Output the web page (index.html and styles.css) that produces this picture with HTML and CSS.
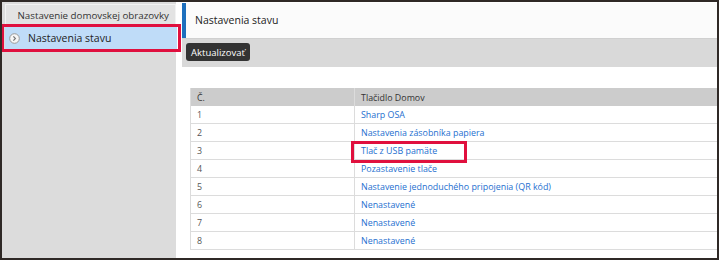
FILE: index.html
```html
<!DOCTYPE html>
<html lang="sk">
<head>
    <meta charset="UTF-8">
    <meta name="viewport" content="width=device-width, initial-scale=1.0">
    <title>Nastavenia stavu</title>
    <link rel="stylesheet" href="styles.css">
</head>
<body>
    <div class="frame">
        <aside class="sidebar">
            <div class="tab">Nastavenie domovskej obrazovky</div>
            <div class="menu-item active">
                <svg class="arrow" width="11" height="11" viewBox="0 0 11 11">
                    <circle cx="5.5" cy="5.5" r="4.8" fill="#f6f6f6" stroke="#9a9a9a" stroke-width="1"/>
                    <path d="M4.4 3.4 L6.4 5.5 L4.4 7.6" fill="none" stroke="#777" stroke-width="1.2"/>
                </svg>
                Nastavenia stavu
                <span class="mark mark-menu"></span>
            </div>
        </aside>
        <main class="content">
            <div class="page-title">Nastavenia stavu</div>
            <div class="toolbar">
                <button class="btn-update">Aktualizovať</button>
            </div>
            <table class="list">
                <thead>
                    <tr>
                        <th class="col-no">Č.</th>
                        <th>Tlačidlo Domov</th>
                    </tr>
                </thead>
                <tbody>
                    <tr><td>1</td><td><a href="#">Sharp OSA</a></td></tr>
                    <tr><td>2</td><td><a href="#">Nastavenia zásobníka papiera</a></td></tr>
                    <tr><td>3</td><td class="marked"><a href="#">Tlač z USB pamäte</a><span class="mark mark-row"></span></td></tr>
                    <tr><td>4</td><td><a href="#">Pozastavenie tlače</a></td></tr>
                    <tr><td>5</td><td><a href="#">Nastavenie jednoduchého pripojenia (QR kód)</a></td></tr>
                    <tr><td>6</td><td><a href="#">Nenastavené</a></td></tr>
                    <tr><td>7</td><td><a href="#">Nenastavené</a></td></tr>
                    <tr><td>8</td><td><a href="#">Nenastavené</a></td></tr>
                </tbody>
            </table>
        </main>
    </div>
</body>
</html>
```

FILE: styles.css
```css
body {
  margin: 0;
  font-family: "Open Sans", "Noto Sans", sans-serif;
  color: #333;
}
.frame {
  display: flex;
  width: 719px;
  height: 260px;
  box-sizing: border-box;
  border: 2px solid #2f2926;
  background: #fff;
  overflow: hidden;
}
.sidebar {
  width: 174px;
  flex-shrink: 0;
  background: #dcdcdc;
  padding-top: 2px;
  box-sizing: border-box;
}
.tab {
  margin-left: 3px;
  height: 21px;
  line-height: 21px;
  background: #e3e3e3;
  border: 1px solid #f2f2f2;
  border-bottom: none;
  text-align: right;
  padding-right: 6px;
  font-size: 9.75px;
  color: #333;
  white-space: nowrap;
}
.menu-item {
  position: relative;
  display: flex;
  align-items: center;
  margin: 1px 0 0 3px;
  width: 172px;
  height: 22px;
  background: #bfdcf8;
  font-size: 10.5px;
  color: #222;
}
.arrow {
  margin: 0 8px 0 4px;
}
.mark {
  position: absolute;
  border: 3px solid #e0103e;
  box-sizing: border-box;
}
.mark-menu {
  left: -4px;
  top: -3px;
  width: 180px;
  height: 28px;
}
.content {
  flex: 1;
  padding-left: 6px;
  padding-top: 1px;
}
.page-title {
  height: 35px;
  line-height: 35px;
  background: #fbfbfb;
  border-left: 4px solid #1d6fbd;
  padding-left: 9px;
  font-size: 10.5px;
  color: #222;
}
.toolbar {
  display: flex;
  align-items: flex-start;
  height: 29px;
  background: #d9d9d9;
  border-top: 1px solid #d0d0d0;
  box-sizing: border-box;
  padding: 4px 0 0 4px;
}
.btn-update {
  height: 18px;
  padding: 0 5px;
  border: none;
  border-radius: 3px;
  background: #333;
  color: #fff;
  font-family: inherit;
  font-size: 9.5px;
}
.list {
  margin: 21px 0 0 8px;
  width: 528px;
  border-collapse: collapse;
  font-size: 8.9px;
}
.list th {
  height: 18px;
  padding: 0 6px;
  background: #cccccc;
  font-weight: normal;
  text-align: left;
  color: #333;
  border-left: 1px solid #dcdcdc;
}
.list td {
  height: 17px;
  padding: 0 6px;
  border-left: 1px solid #dcdcdc;
  border-bottom: 1px solid #dcdcdc;
  color: #555;
}
.list .col-no {
  width: 151px;
}
.list a {
  color: #1e6fcf;
  text-decoration: none;
}
.marked {
  position: relative;
}
.mark-row {
  left: -4px;
  top: -1px;
  width: 116px;
  height: 22px;
}
```
